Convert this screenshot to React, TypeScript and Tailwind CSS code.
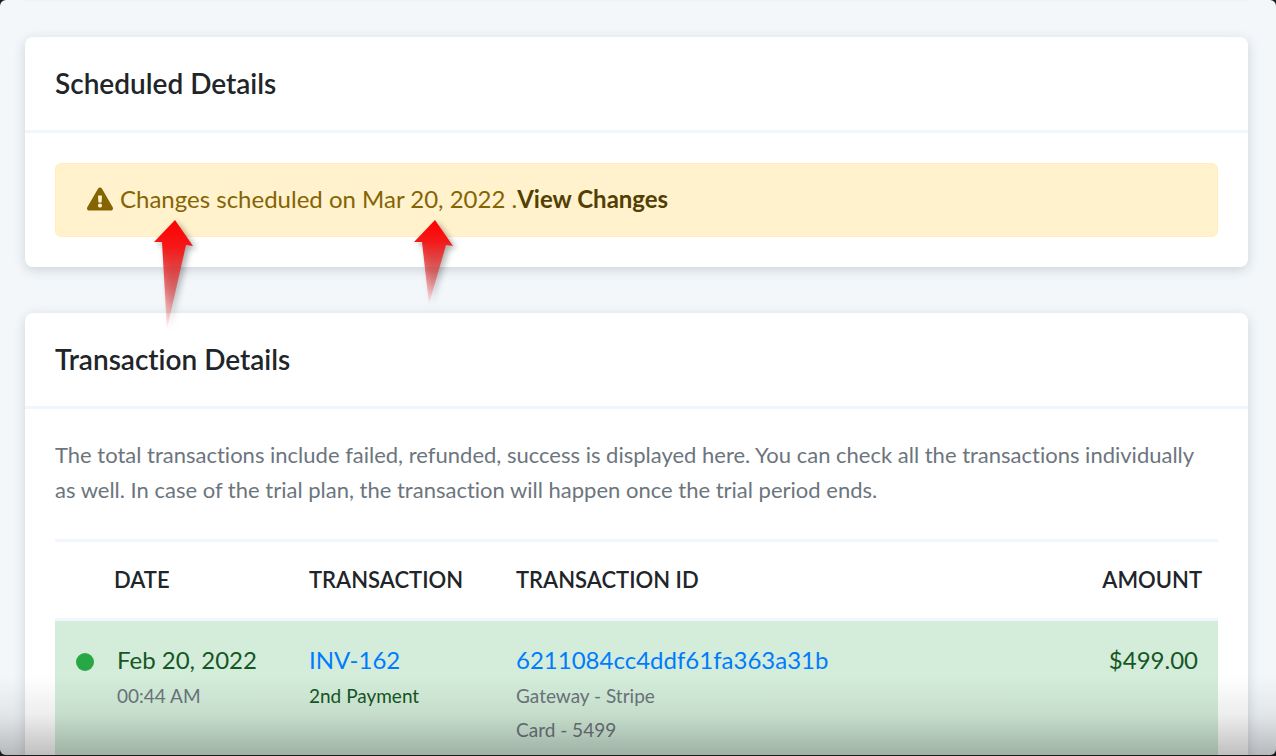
import type { ReactNode } from 'react'
import { FaExclamationTriangle } from 'react-icons/fa'

interface CardProps {
  title: string
  className?: string
  children: ReactNode
}

function Card({ title, className = '', children }: CardProps) {
  return (
    <section className={`rounded-lg bg-white shadow-[0_3px_12px_rgba(30,50,75,0.18)] ${className}`}>
      <header className="border-b-3 border-[#eff6fd] px-[30px] py-[26px]">
        <h2 className="text-[28px] leading-[41px] font-semibold text-[#212529]">{title}</h2>
      </header>
      <div className="px-[30px] pt-7 pb-[30px]">{children}</div>
    </section>
  )
}

interface ArrowProps {
  id: string
  points: string
  height: number
  className: string
}

function Arrow({ id, points, height, className }: ArrowProps) {
  return (
    <svg
      aria-hidden="true"
      width="40"
      height={height}
      className={`pointer-events-none absolute z-10 overflow-visible drop-shadow-[3px_3px_3px_rgba(0,0,0,0.35)] ${className}`}
    >
      <defs>
        <linearGradient id={id} x1="0" y1="0" x2="0" y2="1">
          <stop offset="0" stopColor="#ff0000" />
          <stop offset="0.25" stopColor="#f51818" />
          <stop offset="0.6" stopColor="#e03838" stopOpacity="0.7" />
          <stop offset="1" stopColor="#ff3030" stopOpacity="0.05" />
        </linearGradient>
      </defs>
      <polygon points={points} fill={`url(#${id})`} />
    </svg>
  )
}

const TRANSACTIONS = [
  {
    date: 'Feb 20, 2022',
    time: '00:44 AM',
    invoice: 'INV-162',
    note: '2nd Payment',
    id: '6211084cc4ddf61fa363a31b',
    gateway: 'Gateway - Stripe',
    card: 'Card - 5499',
    amount: '$499.00',
  },
]

export default function App() {
  return (
    <div className="h-screen overflow-hidden bg-[#1c1c1c] pb-px font-['Lato','Open_Sans',sans-serif] [font-variant-ligatures:none]">
      <main className="relative h-full overflow-hidden rounded-md bg-[#f3f7fa] px-7 pl-[25px]">
        <div className="h-0.5 bg-[#eff3f6]" />

        <Card title="Scheduled Details" className="mt-[35px]">
          <div className="relative mt-0.5 rounded-md border border-[#ffeeba] bg-[#fff2cd] px-[31px] pt-[17px] pb-[19px] text-2xl leading-9 text-[#856404]">
            <p>
              <FaExclamationTriangle className="mr-[7px] inline-block align-[-4px] text-[26px]" />
              Changes scheduled on Mar 20, 2022 .
              <a href="#changes" className="font-bold text-[#533f03]">View Changes</a>
            </p>
            <Arrow
              id="arrow-changes"
              height={110}
              className="top-14 left-[98px]"
              points="21,0 39,26 32,25 13,109 8,22 0,22"
            />
            <Arrow
              id="arrow-date"
              height={85}
              className="top-14 left-[358px]"
              points="21,0 39,26 32,25 15,84 8,22 0,22"
            />
          </div>
        </Card>

        <Card title="Transaction Details" className="mt-[46px]">
          <p className="text-[22px] leading-[35px] text-[#6c757d]">
            The total transactions include failed, refunded, success is displayed here. You can check all the transactions individually as well. In case of the trial plan, the transaction will happen once the trial period ends.
          </p>

          <table className="mt-8 w-full table-fixed text-left">
            <colgroup>
              <col className="w-[47px]" />
              <col className="w-[195px]" />
              <col className="w-[207px]" />
              <col />
              <col className="w-[180px]" />
            </colgroup>
            <thead>
              <tr className="border-y-3 border-[#eff6fd] text-[22px] leading-8 text-[#212529] uppercase">
                <th aria-label="Status" />
                <th className="px-3 py-[22px] font-semibold">Date</th>
                <th className="px-3 py-[22px] font-semibold">Transaction</th>
                <th className="px-3 py-[22px] font-semibold">Transaction ID</th>
                <th className="px-4 py-[22px] text-right font-semibold">Amount</th>
              </tr>
            </thead>
            <tbody>
              {TRANSACTIONS.map((t) => (
                <tr key={t.id} className="bg-[#d4edda] align-top text-2xl leading-9 text-[#155724]">
                  <td className="pt-8 pl-[21px]">
                    <span className="block size-[18px] rounded-full bg-[#28a745]" />
                  </td>
                  <td className="py-[21px] pl-[15px]">
                    {t.date}
                    <div className="mt-px text-[19px] leading-[34px] text-[#6c757d]">{t.time}</div>
                  </td>
                  <td className="px-3 py-[21px]">
                    <a href="#invoice" className="text-[#007bff]">{t.invoice}</a>
                    <div className="mt-px text-[19px] leading-[34px]">{t.note}</div>
                  </td>
                  <td className="px-3 py-[21px]">
                    <a href="#transaction" className="text-[#007bff]">{t.id}</a>
                    <div className="mt-px text-[19px] leading-[34px] text-[#6c757d]">{t.gateway}</div>
                    <div className="text-[19px] leading-[34px] text-[#6c757d]">{t.card}</div>
                  </td>
                  <td className="px-5 py-[21px] text-right">{t.amount}</td>
                </tr>
              ))}
            </tbody>
          </table>
        </Card>

        {/* fade along the bottom edge */}
        <div className="pointer-events-none absolute inset-x-0 bottom-0 h-20 bg-linear-to-t from-black/25 via-black/7 to-transparent" />
      </main>
    </div>
  )
}
